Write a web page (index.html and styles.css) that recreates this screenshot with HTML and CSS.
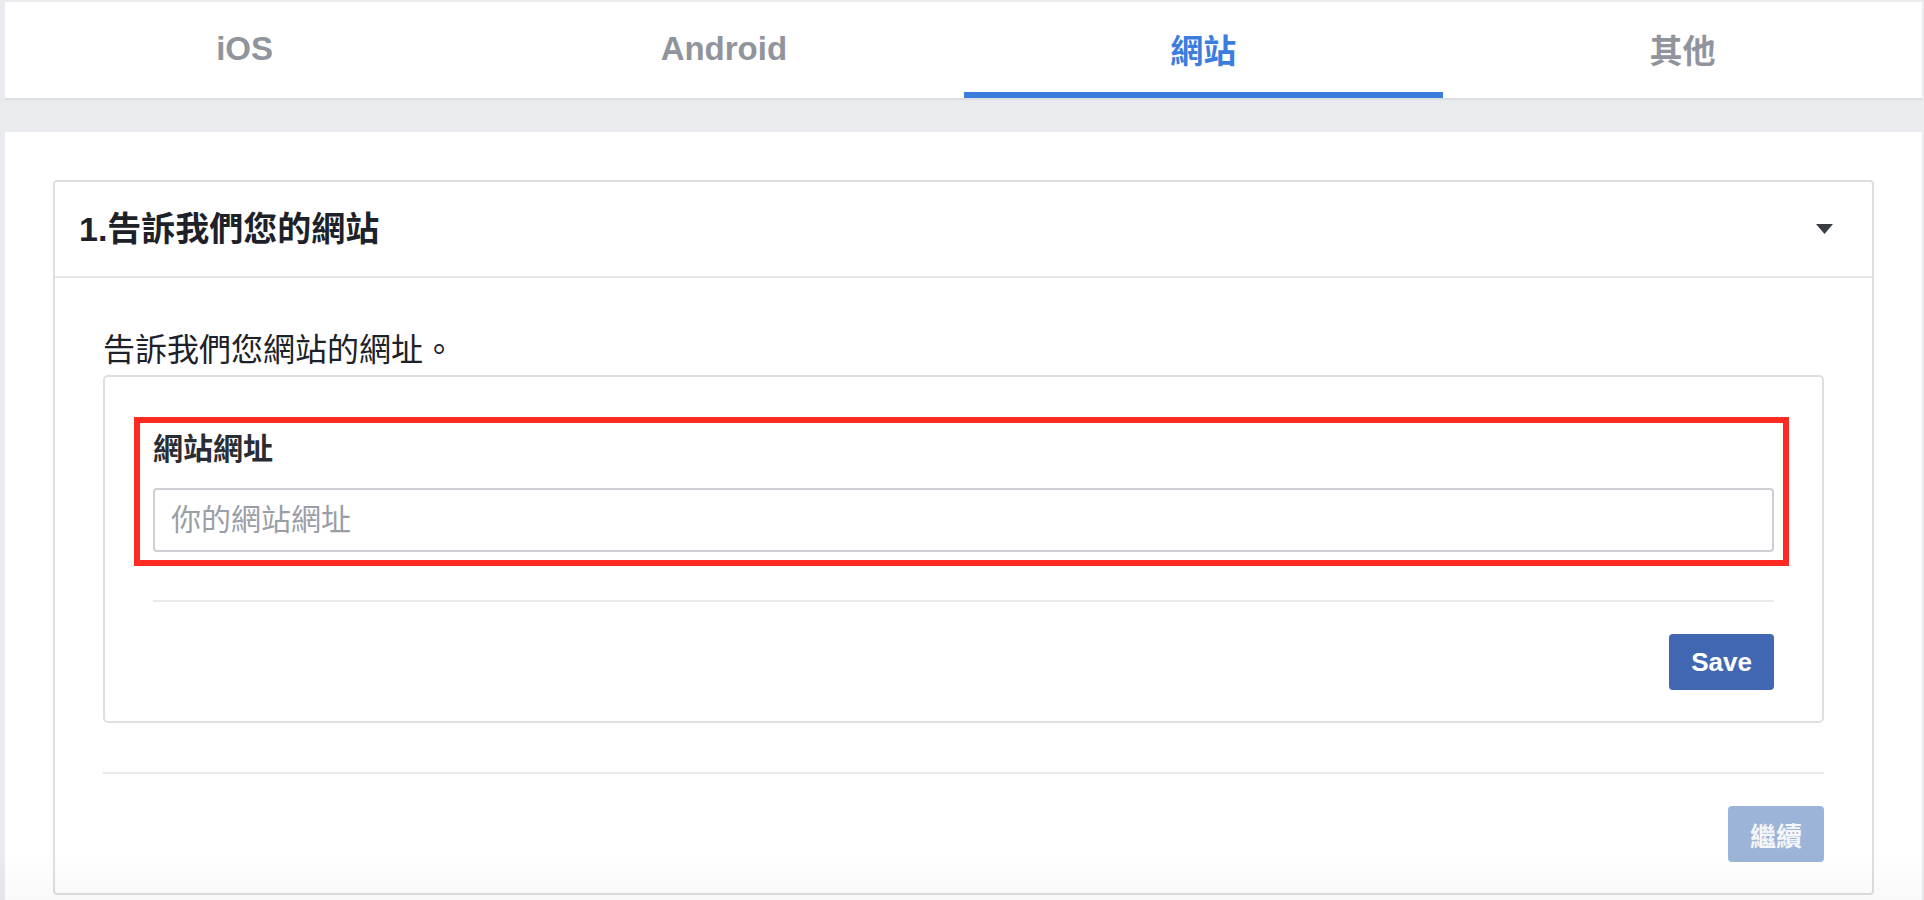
FILE: index.html
```html
<!DOCTYPE html>
<html lang="zh-Hant">
<head>
<meta charset="utf-8">
<title>網站</title>
<link rel="stylesheet" href="styles.css">
</head>
<body>
<div class="page">
  <nav class="tabs">
    <div class="tab">iOS</div>
    <div class="tab">Android</div>
    <div class="tab active">網站</div>
    <div class="tab">其他</div>
  </nav>
  <main class="panel">
    <section class="card">
      <header class="card-head">
        <h2 class="card-title">1.告訴我們您的網站</h2>
        <svg class="caret" viewBox="0 0 17 10" aria-hidden="true"><polygon points="0,0 17,0 8.5,10" /></svg>
      </header>
      <div class="card-body">
        <p class="desc">告訴我們您網站的網址。</p>
        <div class="box">
          <div class="highlight">
            <label class="field-label" for="site">網站網址</label>
            <input class="field-input" id="site" type="text" placeholder="你的網站網址">
          </div>
          <hr class="sep">
          <div class="actions"><button class="btn btn-primary">Save</button></div>
        </div>
        <hr class="sep outer">
        <div class="actions"><button class="btn btn-disabled">繼續</button></div>
      </div>
    </section>
  </main>
</div>
<div class="bottom-fade"></div>
</body>
</html>
```
FILE: styles.css
```css
html, body {
  margin: 0;
}
body {
  background: #e9ebee;
  font-family: "Liberation Sans", "Noto Sans CJK TC", sans-serif;
  color: #1d2129;
}
.page {
  padding: 2px 2px 0 5px;
}
.tabs {
  display: flex;
  background: #fff;
  height: 96px;
  border-bottom: 2px solid #dadde1;
  margin-bottom: 32px;
}
.tab {
  flex: 1;
  display: flex;
  align-items: center;
  justify-content: center;
  box-sizing: border-box;
  padding-top: 3px;
  border-bottom: 6px solid transparent;
  font-size: 33px;
  font-weight: 700;
  color: #90949c;
}
.tab.active {
  color: #3b7ddd;
  border-bottom-color: #3b7ddd;
}
.panel {
  background: #fff;
  padding: 48px;
}
.card {
  border: 2px solid #dddfe2;
  border-radius: 4px;
}
.card-head {
  height: 94px;
  display: flex;
  align-items: center;
  justify-content: space-between;
  padding: 0 39px 0 24px;
  border-bottom: 2px solid #e5e6e9;
}
.card-title {
  margin: 0;
  font-size: 34px;
  line-height: 40px;
  font-weight: 700;
  color: #1d2129;
}
.caret {
  width: 17px;
  height: 10px;
  fill: #3a3d42;
}
.card-body {
  padding: 48px 48px 31px;
}
.desc {
  margin: 0 0 1px;
  font-size: 32px;
  line-height: 48px;
  color: #1d2129;
}
.box {
  border: 2px solid #dddfe2;
  border-radius: 5px;
  padding: 40px 48px 31px;
}
.highlight {
  border: 6px solid #fd2b22;
  margin: 0 -15px 0 -19px;
  padding: 8px 9px 8px 13px;
}
.field-label {
  display: block;
  font-size: 30px;
  line-height: 36px;
  font-weight: 700;
  color: #2a2d33;
  margin-bottom: 21px;
}
.field-input {
  display: block;
  width: 100%;
  box-sizing: border-box;
  height: 64px;
  margin: 0;
  border: 2px solid #ccd0d5;
  border-radius: 4px;
  padding: 0 16px;
  font-family: inherit;
  font-size: 30px;
  color: #1d2129;
  outline: none;
  background: #fff;
}
.field-input::placeholder {
  color: #9a9ea6;
}
.sep {
  border: 0;
  height: 2px;
  background: #e9eaed;
  margin: 34px 0 0;
}
.sep.outer {
  margin-top: 49px;
}
.actions {
  display: flex;
  justify-content: flex-end;
  margin-top: 32px;
}
.btn {
  height: 56px;
  padding: 0 22px;
  border: 0;
  border-radius: 4px;
  font-family: inherit;
  font-size: 26px;
  font-weight: 700;
  color: #fff;
  cursor: pointer;
}
.btn-primary {
  background: #4267b2;
}
.btn-disabled {
  background: #9cb4d8;
  color: #f5f6f7;
}
.bottom-fade {
  position: fixed;
  left: 0;
  right: 0;
  bottom: 0;
  height: 48px;
  background: linear-gradient(rgba(0, 0, 0, 0), rgba(0, 0, 0, 0.025));
  pointer-events: none;
}
```
